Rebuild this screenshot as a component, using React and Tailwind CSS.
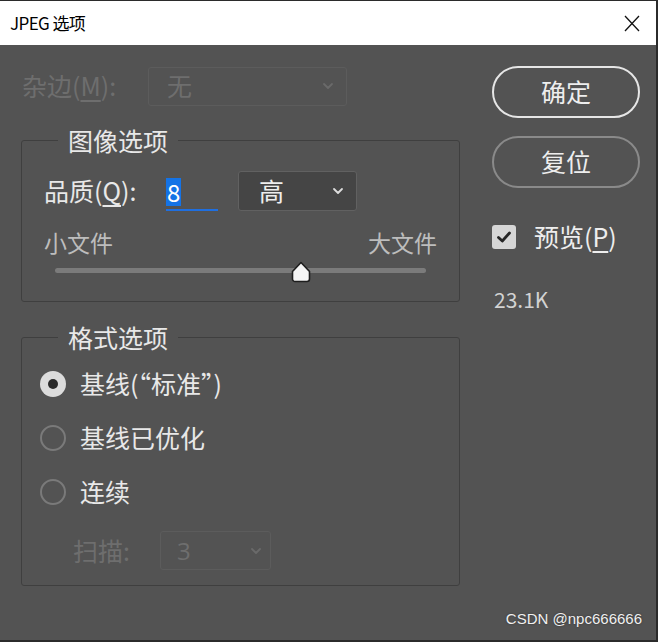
const font = { fontFamily: '"Noto Sans CJK SC", "Noto Sans", sans-serif' };

function Chevron({ className = '' }) {
  return (
    <svg width="12" height="8" viewBox="0 0 12 8" className={className}>
      <path d="M2 2l4 4 4-4" fill="none" stroke="currentColor" strokeWidth="1.8" strokeLinecap="round" strokeLinejoin="round" />
    </svg>
  );
}

function Radio({ checked, label }) {
  return (
    <div className="flex h-[54px] items-center">
      {checked ? (
        <span className="flex h-[26px] w-[26px] items-center justify-center rounded-full bg-[#dcdcdc]">
          <span className="h-[10px] w-[10px] rounded-full bg-[#2a2a2a]" />
        </span>
      ) : (
        <span className="h-[26px] w-[26px] rounded-full border-2 border-[#7a7a7a]" />
      )}
      <span className="ml-[14px] text-[25px] text-[#e8e8e8]">{label}</span>
    </div>
  );
}

function Group({ title, className = '', children }) {
  return (
    <fieldset className={`rounded-[3px] border border-[#3f3f3f] ${className}`}>
      <legend className="ml-[36px] px-[10px] text-[25px] leading-[30px] text-[#e8e8e8]">{title}</legend>
      {children}
    </fieldset>
  );
}

export default function App() {
  return (
    <div className="h-[642px] w-[658px] overflow-hidden border-t border-r-2 border-b-2 border-[#2b2b2b] bg-[#535353]" style={font}>
      <div className="flex h-[44px] items-center justify-between bg-white pl-[10px] pr-[16px]">
        <span className="text-[17px] tracking-[-0.6px] text-black">JPEG&nbsp;选项</span>
        <svg width="16" height="17" viewBox="0 0 16 17">
          <path d="M1 1l14 15M15 1L1 16" stroke="#111" strokeWidth="1.3" fill="none" />
        </svg>
      </div>

      <div className="flex pl-[21px] pt-[21px]">
        <div className="w-[439px]">
          <div className="flex h-[40px] items-center">
            <span className="ml-[1px] w-[126px] text-[25px] text-[#6e6e6e]">
              杂边(<u className="underline-offset-4">M</u>):
            </span>
            <div className="flex h-[39px] w-[199px] items-center justify-between rounded-[3px] border border-[#5c5c5c] pl-[18px] pr-[12px]">
              <span className="text-[25px] text-[#6e6e6e]">无</span>
              <Chevron className="text-[#6a6a6a]" />
            </div>
          </div>

          <Group title="图像选项" className="mt-[19px] h-[177px]">
            <div className="mt-[16px] flex h-[40px] items-center pl-[22px]">
              <span className="w-[122px] text-[25px] text-[#e8e8e8]">
                品质(<u className="underline-offset-4">Q</u>):
              </span>
              <div className="flex h-[40px] w-[52px] flex-col justify-center border-b-2 border-[#1f6fe0]">
                <span className="mt-[4px] w-fit bg-[#1473e6] px-[1px] text-[24px] leading-[28px] text-white">8</span>
              </div>
              <div className="ml-[20px] flex h-[40px] w-[119px] items-center justify-between rounded-[3px] border border-[#616161] bg-[#454545] pl-[20px] pr-[12px]">
                <span className="text-[25px] text-[#eeeeee]">高</span>
                <Chevron className="text-[#dddddd]" />
              </div>
            </div>
            <div className="mt-[16px] flex justify-between px-[22px] text-[23px] leading-[30px] text-[#bdbdbd]">
              <span>小文件</span>
              <span>大文件</span>
            </div>
            <div className="relative mx-[33px] mt-[11px] h-[5px] rounded-full bg-[#7b7b7b]">
              <svg width="24" height="24" viewBox="0 0 24 24" className="absolute left-[234px] top-[-8px]">
                <path d="M12 2.5L20.5 11.5V19a2.5 2.5 0 0 1-2.5 2.5H6A2.5 2.5 0 0 1 3.5 19v-7.5Z" fill="#f5f5f5" stroke="#1e1e1e" strokeWidth="1.6" strokeLinejoin="round" />
              </svg>
            </div>
          </Group>

          <Group title="格式选项" className="mt-[20px] h-[264px]">
            <div className="mt-[5px] pl-[18px]">
              <Radio checked label={'基线(“标准”)'} />
              <Radio label="基线已优化" />
              <Radio label="连续" />
            </div>
            <div className="mt-[12px] flex h-[39px] items-center pl-[51px]">
              <span className="w-[87px] text-[25px] text-[#6e6e6e]">扫描:</span>
              <div className="flex h-[39px] w-[111px] items-center justify-between rounded-[3px] border border-[#5c5c5c] pl-[16px] pr-[8px]">
                <span className="text-[24px] text-[#6e6e6e]" style={{ fontFamily: '"Open Sans", sans-serif' }}>3</span>
                <Chevron className="text-[#6a6a6a]" />
              </div>
            </div>
          </Group>
        </div>

        <div className="ml-[32px] flex w-[148px] flex-col">
          <button className="h-[52px] w-[148px] rounded-full border-2 border-[#e6e6e6] text-[25px] text-[#eeeeee]">确定</button>
          <button className="mt-[18px] h-[52px] w-[148px] rounded-full border-2 border-[#8a8a8a] text-[25px] text-[#eeeeee]">复位</button>
          <div className="mt-[30px] flex items-center">
            <span className="flex h-[24px] w-[24px] items-center justify-center rounded-[3px] bg-[#d6d6d6]">
              <svg width="16" height="14" viewBox="0 0 16 14">
                <path d="M2.5 7.5l3.8 3.5L13.5 3" fill="none" stroke="#262626" strokeWidth="2.8" strokeLinecap="round" strokeLinejoin="round" />
              </svg>
            </span>
            <span className="ml-[18px] text-[25px] text-[#eeeeee]">
              预览(<u className="underline-offset-4">P</u>)
            </span>
          </div>
          <span className="ml-[2px] mt-[28px] text-[21px] text-[#d2d2d2]">23.1K</span>
        </div>
      </div>

      <div className="mt-[22px] flex justify-end pr-[14px]">
        <span className="text-[15px] text-[#f0f0f0]" style={{ fontFamily: '"Liberation Sans", sans-serif', textShadow: '0 0 2px #333' }}>
          CSDN @npc666666
        </span>
      </div>
    </div>
  );
}
